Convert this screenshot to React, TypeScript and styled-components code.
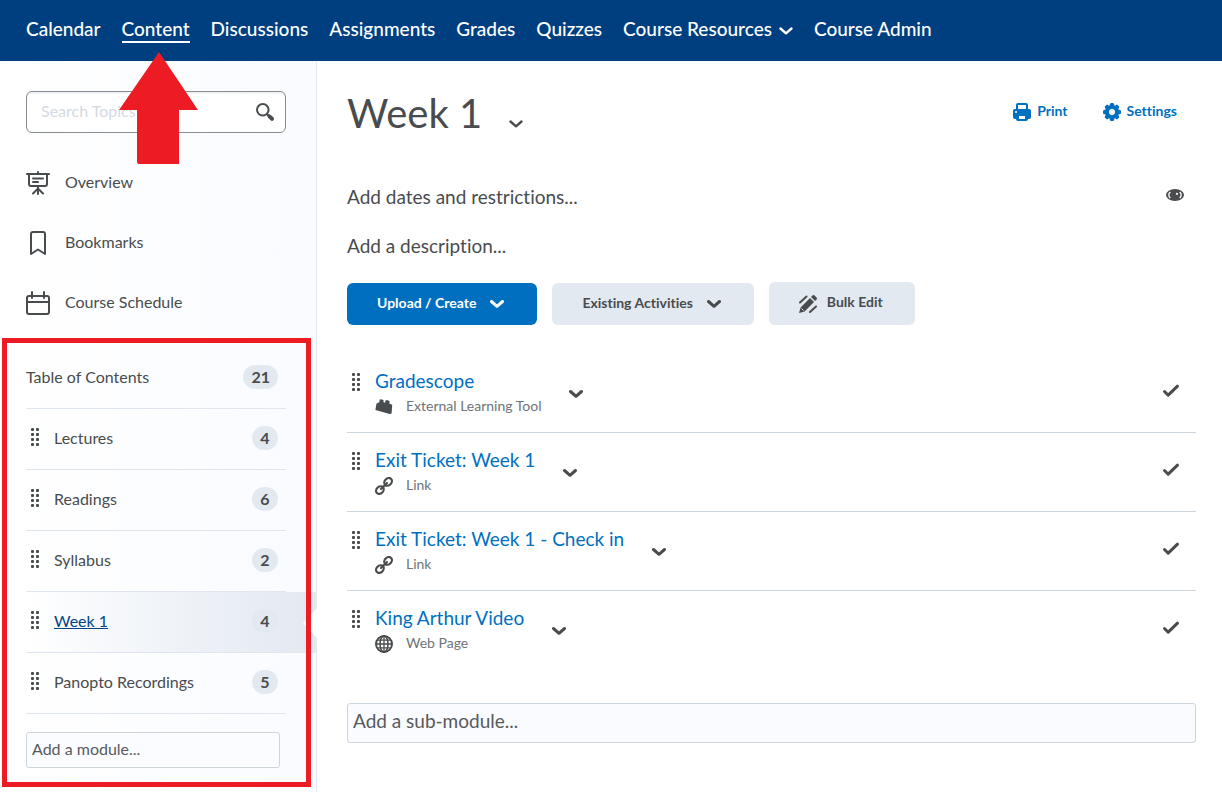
import React from 'react';
import styled, { createGlobalStyle } from 'styled-components';

const ink = '#494c4e';
const blue = '#006fbf';

const GlobalStyle = createGlobalStyle`
  *, *::before, *::after { box-sizing: border-box; }
  body {
    margin: 0;
    background: #fff;
    color: ${ink};
    font-family: Lato, "Liberation Sans", sans-serif;
    font-size: 16px;
    line-height: 24px;
    font-variant-ligatures: none;
  }
  button, input { font: inherit; color: inherit; }
  button { cursor: pointer; }
  ul { list-style: none; margin: 0; padding: 0; }
  svg { display: block; flex: none; }
`;

const Page = styled.div`
  position: relative;
  display: flex;
  flex-direction: column;
  min-height: 100vh;
`;

const NavBar = styled.nav`
  display: flex;
  align-items: center;
  gap: 21px;
  height: 61px;
  padding: 0 26px 4px;
  background: #003f7f;
`;

const NavLink = styled.a<{ $active?: boolean }>`
  display: flex;
  align-items: center;
  gap: 7px;
  color: #fff;
  font-size: 19px;
  font-weight: 500;
  line-height: 24px;
  text-decoration: none;
  white-space: nowrap;
  box-shadow: ${p => (p.$active ? '0 2px 0 #fff' : 'none')};
  & > svg { margin-top: 4px; }
`;

const Columns = styled.div`
  display: flex;
  flex: 1;
`;

const Sidebar = styled.aside`
  flex: none;
  width: 317px;
  border-right: 1px solid #e3e9f1;
  background: linear-gradient(to right, #ffffff, #f9fbff);
`;

const SearchBox = styled.form`
  display: flex;
  align-items: center;
  height: 42px;
  margin: 30px 30px 20px 26px;
  padding: 0 10px 0 14px;
  border: 1px solid #868c8f;
  border-radius: 6px;
  background: #fff;
  box-shadow: inset 0 2px 0 #f1f3f6;
`;

const SearchInput = styled.input`
  flex: 1;
  min-width: 0;
  padding: 0 0 2px;
  border: 0;
  background: none;
  outline: none;
  &::placeholder { color: #d3dae3; opacity: 1; }
`;

const IconButton = styled.button`
  display: inline-flex;
  padding: 0;
  border: 0;
  background: none;
`;

const ShortcutLink = styled.a`
  display: flex;
  align-items: center;
  gap: 15px;
  height: 60px;
  padding-left: 26px;
  color: ${ink};
  text-decoration: none;
  & > span { padding-bottom: 2px; }
`;

const Toc = styled.div`
  margin-top: 15px;
`;

const GripSlot = styled.span`
  display: inline-flex;
  width: 28px;
  padding-left: 5px;
`;

const TocRow = styled.div<{ $active?: boolean }>`
  position: relative;
  display: flex;
  align-items: center;
  height: 61px;
  padding: 0 38px 4px 26px;
  background: ${p =>
    p.$active ? 'linear-gradient(to right, rgba(227,233,241,0) 10%, #e3e9f1)' : 'none'};
  &::after {
    content: '';
    position: absolute;
    left: 26px;
    right: 30px;
    bottom: 0;
    border-bottom: 1px solid #dfe6ef;
  }
  & > ${GripSlot} { padding-bottom: 2px; }
`;

const TocLink = styled.a<{ $active?: boolean }>`
  flex: 1;
  color: ${p => (p.$active ? '#004489' : ink)};
  text-decoration: ${p => (p.$active ? 'underline' : 'none')};
`;

const Count = styled.span`
  min-width: 26px;
  height: 24px;
  padding: 0 8px;
  border-radius: 12px;
  background: #e3e9f1;
  font-weight: 700;
  line-height: 23px;
  text-align: center;
`;

const Notch = styled.svg`
  position: absolute;
  right: -1px;
  top: 16px;
`;

const ModuleInput = styled.input`
  display: block;
  width: 254px;
  height: 36px;
  margin: 18px 0 24px 26px;
  padding: 0 5px 3px;
  border: 1px solid #cdd5dc;
  border-radius: 3px;
  background: #fbfcff;
  &::placeholder { color: #565a5c; opacity: 1; }
`;

const Main = styled.main`
  flex: 1;
  min-width: 0;
  padding: 26px 26px 24px 30px;
`;

const TitleBar = styled.header`
  display: flex;
  align-items: flex-start;
  justify-content: space-between;
  padding-right: 19px;
`;

const TitleGroup = styled.div`
  display: flex;
  align-items: center;
  gap: 27px;
  & > button { margin-top: 22px; }
`;

const Title = styled.h1`
  margin: 0;
  font-size: 40px;
  font-weight: 400;
  line-height: 52px;
`;

const Actions = styled.div`
  display: flex;
  gap: 35px;
  padding-top: 12px;
`;

const ActionLink = styled.a`
  display: flex;
  align-items: center;
  gap: 6px;
  color: ${blue};
  font-size: 14px;
  font-weight: 700;
  text-decoration: none;
  & > span { padding-bottom: 2px; }
`;

const MetaRow = styled.div`
  display: flex;
  align-items: flex-start;
  justify-content: space-between;
  padding-right: 12px;
  & > ${IconButton} { padding-top: 4px; }
`;

const Meta = styled.div`
  display: flex;
  flex-direction: column;
  gap: 25px;
  margin-top: 46px;
`;

const TextButton = styled.button`
  align-self: flex-start;
  padding: 0;
  border: 0;
  background: none;
  font-size: 19px;
  line-height: 24px;
`;

const ButtonRow = styled.div`
  display: flex;
  align-items: flex-end;
  gap: 15px;
  margin-top: 24px;
`;

const Button = styled.button<{ $primary?: boolean; $tall?: boolean }>`
  display: flex;
  align-items: center;
  gap: ${p => (p.$tall ? '10px' : '14px')};
  height: ${p => (p.$tall ? '43px' : '42px')};
  padding: ${p => (p.$tall ? '0 32px 3px 30px' : '0 33px 2px 30px')};
  border: 0;
  border-radius: 6px;
  background: ${p => (p.$primary ? blue : '#e3e9f1')};
  color: ${p => (p.$primary ? '#fff' : ink)};
  font-size: 14px;
  font-weight: 700;
  & > svg { margin-top: ${p => (p.$tall ? '4px' : '2px')}; }
`;

const Topics = styled.ul`
  margin-top: 29px;
`;

const Topic = styled.li`
  display: flex;
  align-items: flex-start;
  height: 79px;
  padding: 14px 16px 0 0;
  border-bottom: 1px solid #cdd5dc;
  &:last-child { border-bottom: 0; }
  & > ${GripSlot} { padding-top: 5px; }
`;

const TopicMenu = styled(IconButton)`
  margin: 19px auto 0 28px;
`;

const CheckSlot = styled.span`
  padding-top: 16px;
`;

const TopicLink = styled.a`
  color: ${blue};
  font-size: 19px;
  line-height: 26px;
  text-decoration: none;
`;

const TopicKind = styled.div`
  display: flex;
  align-items: center;
  gap: 13px;
  color: #6e7477;
  font-size: 14px;
  & > svg { margin-top: 2px; }
`;

const SubModuleInput = styled.input`
  display: block;
  width: 100%;
  height: 40px;
  margin-top: 33px;
  padding: 0 5px 5px;
  border: 1px solid #cdd5dc;
  border-radius: 3px;
  background: #f9fbff;
  font-size: 19px;
  &::placeholder { color: #565a5c; opacity: 1; }
`;

const ArrowMark = styled.svg`
  position: absolute;
  left: 119px;
  top: 52px;
  pointer-events: none;
`;

const TocOutline = styled.div`
  position: absolute;
  left: 2px;
  top: -10px;
  right: 5px;
  bottom: -19px;
  border: 5px solid #ed1c24;
  pointer-events: none;
`;

const TocFrame = styled.div`
  position: relative;
`;

const Chevron = ({ width = 3 }: { width?: number }) => (
  <svg width="14" height="14" viewBox="0 0 14 14" fill="none" stroke="currentColor" strokeWidth={width} strokeLinecap="round" strokeLinejoin="round">
    <path d="M1.500 4.500 7 9.300l5.500-4.800" />
  </svg>
);

const Grip = () => (
  <svg width="9" height="18" viewBox="0 0 9 18" fill="currentColor">
    {[0, 5, 10, 15].map(y => (
      <React.Fragment key={y}>
        <rect x="0" y={y} width="3" height="3" rx="0.9" />
        <rect x="5" y={y} width="3" height="3" rx="0.9" />
      </React.Fragment>
    ))}
  </svg>
);

const SearchIcon = () => (
  <svg width="20" height="20" viewBox="0 0 20 20" fill="none" stroke={ink} strokeLinecap="round">
    <circle cx="7.800" cy="7.800" r="5.800" strokeWidth="2" />
    <path d="M12.200 12.200l1.800 1.800" strokeWidth="2" />
    <path d="M14.400 14.400l2.600 2.400" strokeWidth="4" />
  </svg>
);

const OverviewIcon = () => (
  <svg width="24" height="24" viewBox="0 0 24 24" fill="none" stroke={ink} strokeWidth="2" strokeLinecap="round">
    <path d="M1 3h22M12 1v2M3 3v10a2 2 0 0 0 2 2h14a2 2 0 0 0 2-2V3M12 16v7M12 17.500l-5 5M12 17.500l5 5" />
    <path d="M7 7.500h10M7 11h5" />
  </svg>
);

const BookmarkIcon = () => (
  <svg width="24" height="24" viewBox="0 0 24 24" fill="none" stroke={ink} strokeWidth="2" strokeLinejoin="round">
    <path d="M5 23V3a2 2 0 0 1 2-2h10a2 2 0 0 1 2 2v20l-7-4.500z" />
  </svg>
);

const CalendarIcon = () => (
  <svg width="24" height="24" viewBox="0 0 24 24" fill="none" stroke={ink} strokeWidth="2" strokeLinecap="round">
    <rect x="1" y="5" width="22" height="18" rx="2" />
    <path d="M1 11h22M6 1v6M18 1v6" />
  </svg>
);

const PrintIcon = () => (
  <svg width="18" height="18" viewBox="0 0 18 18" fill="currentColor" fillRule="evenodd">
    <path d="M5 0h8a2 2 0 0 1 2 2v4h1a2 2 0 0 1 2 2v6a2 2 0 0 1-2 2h-1a2 2 0 0 1-2 2H5a2 2 0 0 1-2-2H2a2 2 0 0 1-2-2V8a2 2 0 0 1 2-2h1V2a2 2 0 0 1 2-2zM5 2v4h8V2zM6 13v3h6v-3zM3 8a1 1 0 1 0 0 2 1 1 0 0 0 0-2z" />
  </svg>
);

const SettingsIcon = () => (
  <svg width="18" height="18" viewBox="0 0 18 18">
    <g fill="currentColor">
      {[0, 45, 90, 135].map(a => (
        <rect key={a} x="6.800" y="0" width="4.400" height="18" rx="1.500" transform={`rotate(${a} 9 9)`} />
      ))}
      <circle cx="9" cy="9" r="7" />
    </g>
    <circle cx="9" cy="9" r="3" fill="#fff" />
  </svg>
);

const EyeIcon = () => (
  <svg width="18" height="12" viewBox="0 0 18 12">
    <ellipse cx="9" cy="6" rx="9" ry="6" fill={ink} />
    <path d="M4.300 3c-2 1.700-2 4.300 0 6M13.700 3c2 1.700 2 4.300 0 6" fill="none" stroke="#fff" strokeWidth="1.300" />
    <circle cx="11" cy="4.800" r="1.100" fill="#fff" />
  </svg>
);

const BulkEditIcon = () => (
  <svg width="18" height="18" viewBox="0 0 18 18" fill={ink}>
    <path d="M0 18l1.600-5.600L11 3l4 4-9.400 9.400zM12 2l1.500-1.500a1.500 1.500 0 0 1 2.100 0l1.900 1.900a1.500 1.500 0 0 1 0 2.100L16 6z" />
    <path d="M1 7.500L7.500 1.500M11 17l6-5.500" stroke={ink} strokeWidth="2" strokeLinecap="round" />
    <path d="M2.500 13.500l2 2" stroke="#e3e9f1" strokeWidth="1" />
  </svg>
);

const BrickIcon = () => (
  <svg width="18" height="18" viewBox="0 0 18 18" fill={ink}>
    <path d="M3.500 4.500L4.500 4V1.800L6 1.200l2.500.7v2.400l1.800.5V2.700l1.500-.6 2.700.8v2.800l2.700 1-.6 8.800L14.800 16 .400 12l1-6.200z" />
  </svg>
);

const LinkIcon = () => (
  <svg width="18" height="18" viewBox="0 0 18 18" fill="none" stroke={ink} strokeWidth="2.200" strokeLinecap="round">
    <ellipse cx="4.900" cy="13.100" rx="4.200" ry="3.400" transform="rotate(-45 4.900 13.100)" />
    <ellipse cx="13.100" cy="4.900" rx="4.200" ry="3.400" transform="rotate(-45 13.100 4.900)" />
    <path d="M6 12l6-6" />
  </svg>
);

const GlobeIcon = () => (
  <svg width="18" height="18" viewBox="0 0 18 18" fill="none" stroke={ink}>
    <circle cx="9" cy="9" r="8" strokeWidth="2" />
    <ellipse cx="9" cy="9" rx="4" ry="8" strokeWidth="1.500" />
    <path d="M9 1v16M1 9h16M2.500 5.200h13M2.500 12.800h13" strokeWidth="1.300" />
  </svg>
);

const CheckIcon = () => (
  <svg width="18" height="14" viewBox="0 0 18 14" fill="none" stroke={ink} strokeWidth="3" strokeLinecap="round" strokeLinejoin="round">
    <path d="M2.500 7.500L6.200 11.200 15.500 2.200" />
  </svg>
);

const navItems = ['Calendar', 'Content', 'Discussions', 'Assignments', 'Grades', 'Quizzes', 'Course Resources', 'Course Admin'];

const shortcuts = [
  { label: 'Overview', icon: <OverviewIcon /> },
  { label: 'Bookmarks', icon: <BookmarkIcon /> },
  { label: 'Course Schedule', icon: <CalendarIcon /> },
];

const modules = [
  { name: 'Lectures', count: 4 },
  { name: 'Readings', count: 6 },
  { name: 'Syllabus', count: 2 },
  { name: 'Week 1', count: 4, active: true },
  { name: 'Panopto Recordings', count: 5 },
];

const topics = [
  { title: 'Gradescope', kind: 'External Learning Tool', icon: <BrickIcon /> },
  { title: 'Exit Ticket: Week 1', kind: 'Link', icon: <LinkIcon /> },
  { title: 'Exit Ticket: Week 1 - Check in', kind: 'Link', icon: <LinkIcon /> },
  { title: 'King Arthur Video', kind: 'Web Page', icon: <GlobeIcon /> },
];

export default function App() {
  return (
    <Page>
      <GlobalStyle />
      <NavBar aria-label="Course">
        {navItems.map(item => (
          <NavLink key={item} href="#" $active={item === 'Content'}>
            {item}
            {item === 'Course Resources' && <Chevron width={2.4} />}
          </NavLink>
        ))}
      </NavBar>
      <Columns>
        <Sidebar>
          <SearchBox role="search">
            <SearchInput type="text" aria-label="Search Topics" placeholder="Search Topics" />
            <IconButton type="button" aria-label="Search"><SearchIcon /></IconButton>
          </SearchBox>
          {shortcuts.map(s => (
            <ShortcutLink key={s.label} href="#">
              {s.icon}
              <span>{s.label}</span>
            </ShortcutLink>
          ))}
          <TocFrame>
            <Toc>
              <TocRow>
                <TocLink href="#">Table of Contents</TocLink>
                <Count>21</Count>
              </TocRow>
              <ul>
                {modules.map(m => (
                  <li key={m.name}>
                    <TocRow $active={m.active}>
                      <GripSlot><Grip /></GripSlot>
                      <TocLink href="#" $active={m.active}>{m.name}</TocLink>
                      <Count>{m.count}</Count>
                      {m.active && (
                        <Notch width="14" height="30" viewBox="0 0 14 30">
                          <path d="M14 0v30L0 15z" fill="#fff" />
                        </Notch>
                      )}
                    </TocRow>
                  </li>
                ))}
              </ul>
            </Toc>
            <ModuleInput type="text" aria-label="Add a module" placeholder="Add a module..." />
            <TocOutline />
          </TocFrame>
        </Sidebar>
        <Main>
          <TitleBar>
            <TitleGroup>
              <Title>Week 1</Title>
              <IconButton type="button" aria-label="Week 1 actions"><Chevron width={2.4} /></IconButton>
            </TitleGroup>
            <Actions>
              <ActionLink href="#"><PrintIcon /><span>Print</span></ActionLink>
              <ActionLink href="#"><SettingsIcon /><span>Settings</span></ActionLink>
            </Actions>
          </TitleBar>
          <Meta>
            <MetaRow>
              <TextButton type="button">Add dates and restrictions...</TextButton>
              <IconButton type="button" aria-label="Visibility"><EyeIcon /></IconButton>
            </MetaRow>
            <TextButton type="button">Add a description...</TextButton>
          </Meta>
          <ButtonRow>
            <Button type="button" $primary>Upload / Create<Chevron /></Button>
            <Button type="button">Existing Activities<Chevron /></Button>
            <Button type="button" $tall><BulkEditIcon />Bulk Edit</Button>
          </ButtonRow>
          <Topics>
            {topics.map(t => (
              <Topic key={t.title}>
                <GripSlot><Grip /></GripSlot>
                <div>
                  <TopicLink href="#">{t.title}</TopicLink>
                  <TopicKind>{t.icon}{t.kind}</TopicKind>
                </div>
                <TopicMenu type="button" aria-label={`${t.title} actions`}><Chevron /></TopicMenu>
                <CheckSlot><CheckIcon /></CheckSlot>
              </Topic>
            ))}
          </Topics>
          <SubModuleInput type="text" aria-label="Add a sub-module" placeholder="Add a sub-module..." />
        </Main>
      </Columns>
      <ArrowMark width="80" height="112" viewBox="0 0 80 112" aria-hidden="true">
        <path d="M40 0L79 58H60V112H19L18 110V58H0z" fill="#ed1c24" />
      </ArrowMark>
    </Page>
  );
}
